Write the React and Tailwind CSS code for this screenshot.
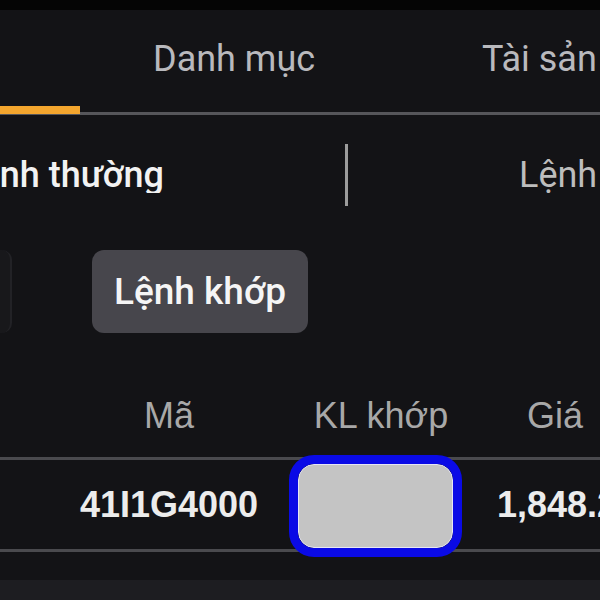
export default function App() {
  const roboto = { fontFamily: 'Roboto, "Noto Sans", sans-serif' };
  const arial = { fontFamily: '"Liberation Sans", Arial, sans-serif' };
  return (
    <div className="w-[600px] h-[600px] overflow-hidden bg-[#131316] flex flex-col">
      <div className="h-[10px] bg-[#050505] shrink-0" />
      {/* main tabs */}
      <div className="relative h-[105px] shrink-0 border-b-[3px] border-[#56565a] flex items-center pb-[5px] whitespace-nowrap" style={roboto}>
        <div className="w-[482px] shrink-0 pl-[153px] text-[36px] leading-none text-[#b9b9bd]">Danh mục</div>
        <div className="shrink-0 text-[36px] leading-none text-[#b9b9bd]">Tài sản</div>
        <div className="absolute left-0 bottom-[-2px] w-[80px] h-[8px] bg-[#f4a62e]" />
      </div>
      {/* sub tabs */}
      <div className="h-[120px] shrink-0 flex items-center whitespace-nowrap" style={roboto}>
        <div className="w-[345px] shrink-0 overflow-hidden">
          <div className="ml-[-39px] text-[36px] leading-none font-medium text-[#f2f2f2]">Lệnh thường</div>
        </div>
        <div className="w-[3px] h-[62px] shrink-0 bg-[#9c9c9c]" />
        <div className="ml-[171px] shrink-0 text-[36px] leading-none text-[#bdbdbd]">Lệnh điều kiện</div>
      </div>
      {/* filter buttons */}
      <div className="pt-[15px] flex items-center shrink-0" style={roboto}>
        <div className="w-[12px] h-[83px] shrink-0 bg-[#18181b] border-r-2 border-[#222226] rounded-r-[10px]" />
        <div className="ml-[80px] w-[216px] h-[83px] shrink-0 rounded-[12px] bg-[#47464c] flex items-center justify-center text-[37px] font-medium leading-none text-[#f5f5f5]">
          Lệnh khớp
        </div>
      </div>
      {/* table header */}
      <div className="mt-[37px] h-[90px] shrink-0 border-b-[3px] border-[#4a4a4e] flex items-center pt-[5px] pl-[64px] whitespace-nowrap text-[36px] leading-none text-[#a8a8a8]" style={arial}>
        <div className="w-[210px] shrink-0 text-center">Mã</div>
        <div className="w-[208px] shrink-0 text-center pl-[6px]">KL khớp</div>
        <div className="shrink-0 pl-[45px]">Giá</div>
      </div>
      {/* row */}
      <div className="h-[92px] shrink-0 border-b-[3px] border-[#4a4a4e] flex items-center pl-[64px] whitespace-nowrap text-[36px] leading-none font-bold text-[#ececec]" style={arial}>
        <div className="w-[210px] shrink-0 text-center">41I1G4000</div>
        <div className="w-[208px] shrink-0 flex justify-center pr-[5px]">
          <div className="w-[155px] h-[84px] mt-[3px] rounded-[16px] bg-[#c4c4c4] border border-[#e6e6f5] outline-[9px] outline-solid outline-[#0a0ae6]" />
        </div>
        <div className="shrink-0 pl-[15px]">1,848.21</div>
      </div>
      <div className="flex-1" />
      <div className="h-[20px] bg-[#1d1d21] shrink-0" />
    </div>
  );
}
